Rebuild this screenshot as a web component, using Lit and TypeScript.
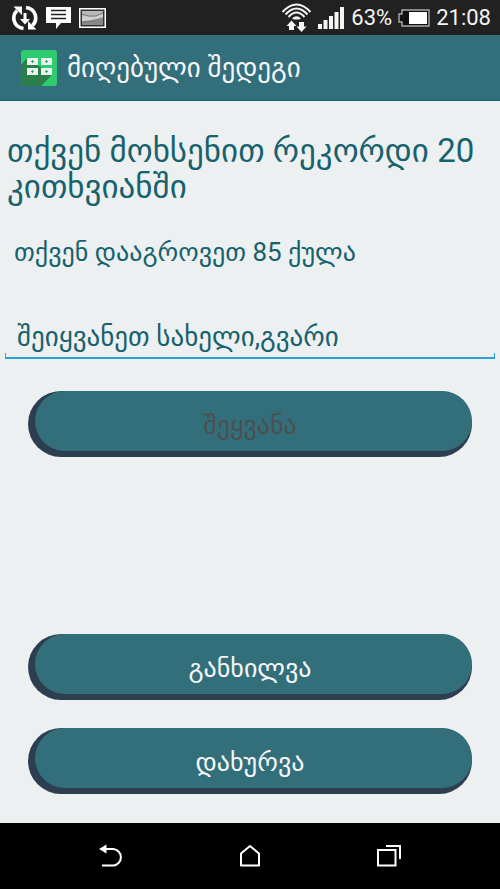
import { LitElement, html, css } from "lit";
import { customElement, property } from "lit/decorators.js";

@customElement("status-bar")
class StatusBar extends LitElement {
  static styles = css`
    :host {
      display: flex;
      align-items: center;
      justify-content: space-between;
      height: 35px;
      padding: 0 9px 0 12px;
      background: #212121;
      color: #f4f4f4;
      font: 22px/35px Roboto, sans-serif;
    }
    .group {
      display: flex;
      align-items: center;
      gap: 8px;
    }
    .system {
      gap: 6px;
    }
    svg {
      display: block;
    }
  `;

  render() {
    return html`
      <div class="group">
        <svg width="26" height="26" viewBox="0 0 26 26" role="img" aria-label="სინქრონიზაცია">
          <g fill="none" stroke="#fff" stroke-width="3.600">
            <path d="M11.500 23.500C1 22 -.5 11 5 5.500" />
            <path d="M14 2.500c10.500 1.500 12 12.500 6.500 18" />
          </g>
          <path fill="#fff" d="M1.500 1.500H10V10zM24.500 24.500H16V16zM11.500 8h3v6H18l-5 5.500L8 14h3.500z" />
        </svg>
        <svg width="25" height="24" viewBox="0 0 25 24" role="img" aria-label="შეტყობინება">
          <path fill="#fff" d="M0 1h25v16H15l-5 6v-6H0z" />
          <path stroke="#212121" stroke-width="1.4" d="M5 4.500h15M5 8.500h15M5 12.500h15" />
        </svg>
        <svg width="27" height="20" viewBox="0 0 27 20" role="img" aria-label="სურათი">
          <path fill="#fff" d="M0 0h27v20H0z" />
          <path fill="#333" d="M1.500 1.500h24v17h-24z" />
          <path fill="#b8b8b8" d="M3 3h21v14H3z" />
          <path fill="#cfcfcf" d="M3 8l8 1 6-1 7-3v4l-12 3-9 1z" />
          <path fill="#888" d="M3 17v-3l11-1 10-2v6z" />
          <path fill="none" stroke="#666" stroke-width=".8" d="M3 6l7 2h7l7-3M3 14l9-1 5-1 7-2" />
        </svg>
      </div>
      <div class="group system">
        <svg width="31" height="29" viewBox="-1 0 31 29" role="img" aria-label="Wi-Fi">
          <g fill="none" stroke="#f4f4f4" stroke-width="2">
            <path d="M.5 9Q14.500-6 28.500 9M3.500 11.500Q14.500 -.5 25.500 11.500M6.500 14Q14.500 5 22.500 14" />
          </g>
          <path fill="#f4f4f4" d="M10 15.500q4.500-4.500 9 0l-2 1h-5zM9.500 17.500l5 5.500h-2.500v4h-5v-4H4.500zM19.500 29l-5-5.500H17V19h5v4.500h2.500z" />
        </svg>
        <svg width="27" height="22" viewBox="0 0 27 22" role="img" aria-label="სიგნალი">
          <path fill="#f4f4f4" d="M0 17h4v5H0zM5.500 13h4v9h-4zM11 9h4v13h-4zM16.500 5h4v17h-4zM22 0h4v22h-4z" />
        </svg>
        <span>63%</span>
        <svg width="32" height="18" viewBox="0 0 32 18" role="img" aria-label="ბატარეა">
          <path fill="#111" stroke="#aaa" stroke-width="1.400" d="M4 1h27v16H4v-4H1V5h3z" />
          <path fill="#fff" d="M11 3h18v12H11z" />
        </svg>
        <time>21:08</time>
      </div>
    `;
  }
}

@customElement("pill-button")
class PillButton extends LitElement {
  @property() label = "";
  @property({ type: Boolean }) disabled = false;

  static styles = css`
    :host {
      display: block;
    }
    button {
      display: flex;
      width: 100%;
      height: 66px;
      padding: 0 0 6px 7px;
      border: 0;
      border-radius: 33px;
      background: #2c3e50;
      color: #f4f6f7;
      font: 26px/32px Roboto, "DejaVu Sans", sans-serif;
      cursor: pointer;
    }
    .face {
      flex: 1;
      box-sizing: border-box;
      height: 60px;
      padding: 18px 7px 0 0;
      border-radius: 30px;
      background: #336f7a;
    }
    button:disabled {
      color: #4b4f52;
      cursor: default;
    }
  `;

  render() {
    return html`<button type="button" ?disabled=${this.disabled}>
      <span class="face">${this.label}</span>
    </button>`;
  }
}

@customElement("nav-bar")
class NavBar extends LitElement {
  static styles = css`
    :host {
      display: grid;
      grid-template-columns: repeat(3, 1fr);
      height: 66px;
      padding: 0 42px;
      background: #000;
    }
    button {
      display: flex;
      align-items: center;
      justify-content: center;
      border: 0;
      padding: 0;
      background: none;
      cursor: pointer;
    }
    svg {
      fill: none;
      stroke: #fff;
      stroke-width: 2;
    }
  `;

  render() {
    return html`
      <button type="button" aria-label="უკან">
        <svg width="24" height="24" viewBox="0 0 24 24">
          <path d="M5 5h9.500a8.300 8.300 0 0 1 0 16.500H3" />
          <path fill="#fff" stroke="none" d="M0 5L7.500 .5v9z" />
        </svg>
      </button>
      <button type="button" aria-label="მთავარი">
        <svg width="24" height="24" viewBox="0 0 24 24">
          <path stroke-linejoin="round" d="M3 21.500V9.500L12 2l9 7.500v12z" />
        </svg>
      </button>
      <button type="button" aria-label="ბოლო აპლიკაციები">
        <svg width="24" height="24" viewBox="0 0 24 24">
          <path d="M1 6h17.500v15.500H1zM9 2h14v13" />
        </svg>
      </button>
    `;
  }
}

@customElement("app-root")
class AppRoot extends LitElement {
  static styles = css`
    :host {
      display: flex;
      flex-direction: column;
      min-height: 100vh;
      background: #ecf0f1;
      color: #17616d;
      font-family: Roboto, "DejaVu Sans", sans-serif;
    }
    header {
      display: flex;
      align-items: center;
      gap: 10px;
      height: 66px;
      box-sizing: border-box;
      padding: 0 21px;
      border-bottom: 1px solid #086472;
      background: #336f7a;
      color: #f4f6f7;
    }
    h1 {
      margin: 0;
      font-size: 27px;
      line-height: 32px;
      font-weight: 400;
    }
    main {
      flex: 1;
      display: flex;
      flex-direction: column;
    }
    .record {
      margin: 32px 7px 0;
      font-size: 33px;
      line-height: 36px;
      font-weight: 400;
    }
    .score {
      margin: 31px 14px 0;
      font-size: 26px;
      line-height: 32px;
    }
    .field {
      display: flex;
      flex-direction: column;
      margin: 53px 5px 0;
    }
    input {
      height: 32px;
      padding: 0 12px;
      border: 0;
      outline: 0;
      background: none;
      color: inherit;
      font: 27px/32px Roboto, "DejaVu Sans", sans-serif;
    }
    .underline {
      height: 4px;
      border: 1px solid #2ba3d4;
      border-top: 0;
      border-bottom-width: 2px;
    }
    .submit {
      margin: 32px 28px 0;
    }
    .actions {
      display: flex;
      flex-direction: column;
      gap: 28px;
      margin: auto 28px 29px;
    }
  `;

  render() {
    return html`
      <status-bar></status-bar>
      <header>
        <svg width="36" height="36" viewBox="0 0 36 36" aria-hidden="true">
          <rect width="36" height="36" rx="3" fill="#2ecc71" />
          <path fill="#2b7f4b" d="M0 15l6-7 25 17-11 11H3q-3 0-3-3z" />
          <path fill="#2ecc71" d="M6 8h25v7H6z" />
          <path fill="#ecf0f1" d="M6 8h11v7H6zM20 8h11v7H20zM6 18h11v7H6zM20 18h11v7H20z" />
          <path stroke="#27ae60" d="M10 11.500h3M11.500 10v3M24 11.500h3M25.500 10v3M10 21.500h3M11.500 20v3M24 21.500h3M25.500 20v3" />
        </svg>
        <h1>მიღებული შედეგი</h1>
      </header>
      <main>
        <h2 class="record">თქვენ მოხსენით რეკორდი 20 კითხვიანში</h2>
        <p class="score">თქვენ დააგროვეთ 85 ქულა</p>
        <div class="field">
          <input type="text" aria-label="სახელი, გვარი" value="შეიყვანეთ სახელი,გვარი" />
          <div class="underline"></div>
        </div>
        <pill-button class="submit" label="შეყვანა" disabled></pill-button>
        <div class="actions">
          <pill-button label="განხილვა"></pill-button>
          <pill-button label="დახურვა"></pill-button>
        </div>
      </main>
      <nav-bar></nav-bar>
    `;
  }
}
